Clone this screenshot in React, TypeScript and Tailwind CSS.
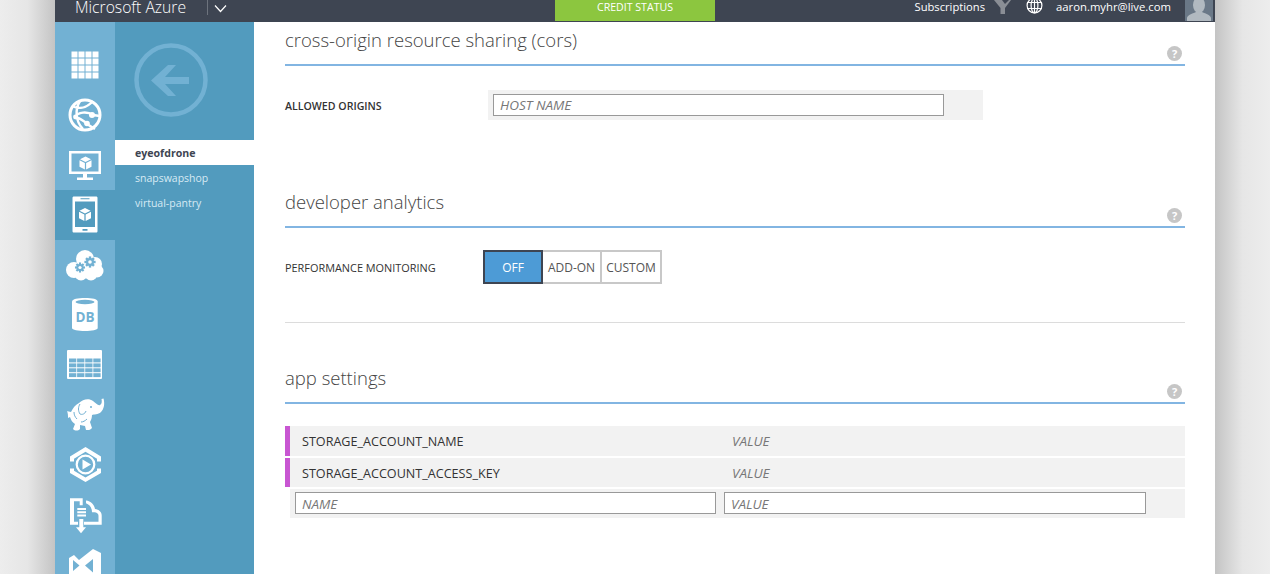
import { ReactNode } from "react";

const font = { fontFamily: '"Open Sans", "Noto Sans", sans-serif' };

// left rail icons, each one is drawn in a 40x40 box and centered in a 50px row
const GridIcon = () => (
  <svg width="40" height="40" viewBox="0 0 40 40" fill="#fff">
    {[0, 1, 2, 3].map((r) =>
      [0, 1, 2, 3].map((c) => <rect key={`${r}${c}`} x={6.5 + c * 7} y={6.5 + r * 7} width="6" height="6" />)
    )}
  </svg>
);

const WebIcon = () => (
  <svg width="40" height="40" viewBox="0 0 40 40" fill="none" stroke="#fff">
    <circle cx="20" cy="20" r="15" strokeWidth="3" />
    <path d="M7 11c6 3 14 3 21-5M15 6c-5 8-5 20 3 28M10 22c3-5 12-6 18-2l7 1M10 22c4 1 8 3 12 7l8 5" strokeWidth="2.4" />
    <circle cx="10.500" cy="22" r="2.400" fill="#fff" stroke="none" />
    <circle cx="27" cy="20" r="3" fill="#fff" stroke="none" />
    <circle cx="22" cy="28.500" r="2.800" fill="#fff" stroke="none" />
  </svg>
);

const Cube = ({ x, y }: { x: number; y: number }) => (
  <g transform={`translate(${x} ${y})`} fill="#fff">
    <path d="M6 0l5.500 2.700L6 5.400.5 2.700z" />
    <path d="M0 3.800l5.400 2.700V13L0 10.200z" />
    <path d="M12 3.800L6.600 6.500V13l5.400-2.800z" />
  </g>
);

const VmIcon = () => (
  <svg width="40" height="40" viewBox="0 0 40 40">
    <path fill="#fff" fillRule="evenodd" d="M4 6h32v23H22v3.500h6V35H12v-2.500h6V29H4zM6.500 8.500v18h27v-18z" />
    <Cube x={14.500} y={11.500} />
  </svg>
);

const MobileIcon = () => (
  <svg width="40" height="40" viewBox="0 0 40 40">
    <path
      fill="#fff"
      fillRule="evenodd"
      d="M9 1.500C8 1.500 7.500 2 7.500 3v33c0 1 .5 1.500 1.500 1.500h22c1 0 1.500-.5 1.500-1.500V3c0-1-.5-1.500-1.500-1.500zM10 6.500h20v25.500H10zM15.500 3.300h9v1h-9zM17.500 34h5v1.800h-5z"
    />
    <Cube x={14} y={13} />
  </svg>
);

const Gear = ({ x, y, r }: { x: number; y: number; r: number }) => (
  <g fill="#72b1d3">
    {[0, 45, 90, 135].map((a) => (
      <rect key={a} x={x - r * 0.3} y={y - r * 1.4} width={r * 0.6} height={r * 2.8} transform={`rotate(${a} ${x} ${y})`} />
    ))}
    <circle cx={x} cy={y} r={r} />
    <circle cx={x} cy={y} r={r * 0.45} fill="#fff" />
  </g>
);

const CloudIcon = () => (
  <svg width="40" height="40" viewBox="0 0 40 40" fill="#fff">
    <circle cx="9" cy="25" r="8" />
    <circle cx="20" cy="14" r="9" />
    <circle cx="30" cy="19" r="7" />
    <circle cx="32" cy="26" r="6.500" />
    <circle cx="16" cy="29" r="6.500" />
    <circle cx="26" cy="29" r="6.500" />
    <rect x="10" y="18" width="22" height="12" />
    <Gear x={15} y={22.500} r={3.600} />
    <Gear x={25} y={17} r={4} />
  </svg>
);

const DbIcon = () => (
  <svg width="40" height="40" viewBox="0 0 40 40">
    <path fill="#fff" d="M7 6.500c0-2.500 6-3.500 13-3.500s12.700 1 12.700 3.500V33c0 2-6 3-12.700 3S7 35 7 33z" />
    <ellipse cx="20" cy="7" rx="9.500" ry="2.200" fill="#72b1d3" />
    <text x="20" y="27" textAnchor="middle" fill="#72b1d3" fontSize="13.500" fontWeight="700" style={font}>
      DB
    </text>
  </svg>
);

const TableIcon = () => (
  <svg width="40" height="40" viewBox="0 0 40 40">
    <rect x="2" y="5" width="35" height="29" rx="1" fill="#fff" />
    {[0, 1, 2, 3].map((r) =>
      [0, 1, 2, 3].map((c) => (
        <rect key={`${r}${c}`} x={4 + c * 8.100} y={13.500 + r * 4.900} width="7.300" height="3.900" fill="#72b1d3" />
      ))
    )}
  </svg>
);

const ElephantIcon = () => (
  <svg width="40" height="40" viewBox="0 0 40 40">
    <path
      fill="#fff"
      d="M1.500 16l4.500 1C8 13 10 10 14 8c4-4 10-5 14-2 3 2 5 5 7 4 2-1 2-4 1.500-6l2-.5c1.500 5.500.5 10.500-2.500 13.500-3 3-7 2-9 3 0 3-1 5-2 7l2 6c-2 2.500-4 2-6 2l-1-4-5-1v4c-2 2-5 2-7 0l2-5c-3-2-4-4-5-7l-2 1c0-2 0-5-1-7z"
    />
    <path fill="none" stroke="#72b1d3" strokeWidth="1" d="M15 9c-2 3-2 7 0 10 2 1 5 0 6-3M9 17c0 3 1 5 3 7M16 27c2 0 4-1 6-3" />
    <circle cx="26" cy="12" r="1" fill="#72b1d3" />
  </svg>
);

const MediaIcon = () => (
  <svg width="40" height="40" viewBox="0 0 40 40">
    <path fill="#fff" d="M20.500 2L36 11.500v5h-4v-2.700L20.500 6.800 9 13.800v2.700H5v-5z" />
    <path fill="#fff" d="M20.500 37L36 28v-4.500h-4v2.300L20.500 32.500 9 25.800v-2.300H5V28z" />
    <circle cx="20.500" cy="19.500" r="8.800" fill="none" stroke="#fff" strokeWidth="2.200" />
    <path fill="#fff" d="M17.500 14.500l8.500 5-8.500 5z" />
  </svg>
);

const ImportIcon = () => (
  <svg width="40" height="40" viewBox="0 0 40 40" fill="#fff">
    <path d="M5 3.300h12.700v7h-3v-4H9v20.400h4v3H5z" />
    <path d="M21 5.500c5 .5 8 4 9 8.500 4 .5 6.700 3 6.700 6.500v9.200H19v-3h14.500v-6c0-2-2-3.500-4-3.500H27c0-5-3-8-6-9z" />
    <path d="M12.300 13H21v2h-8.700zM12.300 16.300H21v2h-8.700zM12.300 19.600H21v2h-8.700z" />
    <path d="M14.300 24h4v8.300H21l-5 6-5-6h3.300z" />
  </svg>
);

const VsIcon = () => (
  <svg width="40" height="40" viewBox="0 0 40 40">
    <path
      fill="#fff"
      fillRule="evenodd"
      d="M28 4l8 4v32H14l-5-2-5-3V13l5-3 5 5zM28 14l-8 6.500 8 7zM8 15v11l6.500-5.500z"
    />
  </svg>
);

const railIcons: { icon: ReactNode; active?: boolean }[] = [
  { icon: <GridIcon /> },
  { icon: <WebIcon /> },
  { icon: <VmIcon /> },
  { icon: <MobileIcon />, active: true },
  { icon: <CloudIcon /> },
  { icon: <DbIcon /> },
  { icon: <TableIcon /> },
  { icon: <ElephantIcon /> },
  { icon: <MediaIcon /> },
  { icon: <ImportIcon /> },
  { icon: <VsIcon /> },
];

function Header() {
  return (
    <div className="flex h-[22px] shrink-0 bg-[#3e4552] text-white">
      <div className="relative w-[500px] shrink-0 overflow-hidden">
        <div className="flex h-[14px] items-center pl-5 text-[15.700px] font-light leading-[14px]">Microsoft Azure</div>
        <div className="absolute left-[152px] top-0 h-[15px] w-px bg-[#6d737d]" />
        <svg className="absolute left-[159px] top-[4px]" width="13" height="9" viewBox="0 0 13 9" fill="none" stroke="#fff" strokeWidth="1.200">
          <path d="M1 1.500l5.500 6 5.500-6" />
        </svg>
      </div>
      <div className="flex h-[21px] w-[160px] shrink-0 items-start justify-center bg-[#8cc63f] text-[10.600px] leading-[14px]">
        CREDIT STATUS
      </div>
      <div className="flex flex-1 items-start justify-end overflow-hidden">
        <span className="text-[11.200px] leading-[14px]">Subscriptions</span>
        <svg className="ml-[8px]" width="18" height="14" viewBox="0 0 18 14" fill="#8a8e95">
          <path d="M1 0h8l3 4 4-4h2L12 8v6H7.500V8z" />
        </svg>
        <svg className="ml-[15px] mt-[-2px]" width="17" height="16" viewBox="0 0 17 16" fill="none" stroke="#fff" strokeWidth="1.200">
          <circle cx="8.500" cy="7.500" r="7.400" />
          <ellipse cx="8.500" cy="7.500" rx="3.400" ry="7.400" />
          <path d="M8.500 0v15M1 4.500h15M1 10.500h15" />
        </svg>
        <span className="ml-[13px] text-[11.300px] leading-[14px]">aaron.myhr@live.com</span>
        <div className="ml-[14px] mr-[2px] h-[21px] w-[28px] overflow-hidden bg-[#6a7887]">
          <svg width="28" height="21" viewBox="0 0 28 21" fill="#b1b9c0">
            <ellipse cx="14" cy="5" rx="6" ry="8" />
            <path d="M2 21v-3c0-3 7-5 9-6h6c2 1 9 3 9 6v3z" />
          </svg>
        </div>
      </div>
    </div>
  );
}

function Rail() {
  return (
    <div className="w-[60px] shrink-0 bg-[#72b1d3] pt-[18px]">
      {railIcons.map((item, i) => (
        <div key={i} className={`flex h-[50px] items-center justify-center ${item.active ? "bg-[#529bbe]" : ""}`}>
          {item.icon}
        </div>
      ))}
    </div>
  );
}

function SubPanel() {
  return (
    <div className="w-[139px] shrink-0 bg-[#529bbe] text-[10.500px] text-[#d7eaf4]">
      <div className="flex h-[118px] items-start pl-[19px] pt-[21px]">
        <svg width="74" height="74" viewBox="0 0 74 74" fill="none">
          <circle cx="37" cy="37" r="34.500" stroke="#72b1d3" strokeWidth="4.500" />
          <path fill="#72b1d3" d="M34 22h8l-11 12h24v7H31l11 12h-8L17 37.500z" />
        </svg>
      </div>
      <div className="flex h-[25px] items-center bg-white pl-5 pt-[2px] text-[10.600px] font-bold text-[#3e4552]">eyeofdrone</div>
      <div className="flex h-[25px] items-center pl-5 pt-[2px]">snapswapshop</div>
      <div className="flex h-[25px] items-center pl-5 pt-[2px]">virtual-pantry</div>
    </div>
  );
}

function SectionHead({ title }: { title: string }) {
  return (
    <div className="flex h-[44px] justify-between border-b-2 border-[#82b5e2]">
      <h2 className="pt-[5px] text-[18.500px] font-light leading-[26px] text-[#444]">{title}</h2>
      <div className="mb-[3px] mr-[3px] flex h-[15px] w-[15px] items-center justify-center self-end rounded-full bg-[#c6c6c6] text-[11px] font-bold leading-none text-white">
        ?
      </div>
    </div>
  );
}

const inputClass =
  "h-[22px] border border-[#999] bg-white px-[6px] text-[13.500px] italic outline-none placeholder:italic placeholder:text-[#777]";

function SettingRow({ name, last }: { name: string; last?: boolean }) {
  return (
    <div className={`flex border-l-[5px] border-[#c856d2] bg-[#f2f2f2] text-[12.600px] text-[#333] ${last ? "mt-[2px] h-[29px] pt-[3px]" : "h-[30px] pt-[2px]"}`}>
      <div className="flex w-[442px] shrink-0 items-center pl-3">{name}</div>
      <div className="flex items-center pb-[1px] text-[13.500px] italic text-[#777]">VALUE</div>
    </div>
  );
}

function Content() {
  return (
    <div className="flex-1 bg-white pl-[31px] pr-[30px] text-[#333]">
      <SectionHead title="cross-origin resource sharing (cors)" />
      <div className="mt-6 flex items-center">
        <div className="w-[203px] shrink-0 pt-[3px] text-[10.600px] font-semibold text-[#333]">ALLOWED ORIGINS</div>
        <div className="flex h-[30px] w-[495px] items-center bg-[#f2f2f2] pl-[5px]">
          <input className={`${inputClass} w-[451px]`} placeholder="HOST NAME" />
        </div>
      </div>

      <div className="mt-16">
        <SectionHead title="developer analytics" />
      </div>
      <div className="mt-[22px] flex items-center">
        <div className="w-[198px] shrink-0 pt-[3px] text-[10.900px] font-medium text-[#333]">PERFORMANCE MONITORING</div>
        <div className="flex h-[34px] text-[12px] text-[#555]">
          <div className="flex w-[60px] items-center justify-center border-2 border-[#3e4552] bg-[#4d9bd6] pt-[2px] text-white">OFF</div>
          <div className="flex w-[59px] items-center justify-center border-y-2 border-r-2 border-[#c8c8c8] pt-[2px]">ADD-ON</div>
          <div className="flex w-[60px] items-center justify-center border-y-2 border-r-2 border-[#c8c8c8] pt-[2px]">CUSTOM</div>
        </div>
      </div>

      <div className="mt-[38px] h-px bg-[#dcdcdc]" />

      <div className="mt-[37px]">
        <SectionHead title="app settings" />
      </div>
      <div className="mt-[22px]">
        <SettingRow name="STORAGE_ACCOUNT_NAME" />
        <SettingRow name="STORAGE_ACCOUNT_ACCESS_KEY" last />
        <div className="ml-[5px] mt-[2px] flex h-[29px] items-start gap-2 bg-[#f2f2f2] pl-[5px] pt-[3px]">
          <input className={`${inputClass} w-[421px] pt-[2px]`} placeholder="NAME" />
          <input className={`${inputClass} w-[422px] pt-[2px]`} placeholder="VALUE" />
        </div>
      </div>
    </div>
  );
}

export default function App() {
  return (
    <div className="flex h-[574px] w-[1270px] overflow-hidden" style={font}>
      <div className="w-[55px] shrink-0 bg-gradient-to-r from-[#ededed] via-[#e6e6e6] to-[#c4c4c4]" />
      <div className="flex w-[1160px] shrink-0 flex-col overflow-hidden">
        <Header />
        <div className="flex min-h-0 flex-1">
          <Rail />
          <SubPanel />
          <Content />
        </div>
      </div>
      <div className="w-[55px] shrink-0 bg-gradient-to-l from-[#ededed] via-[#e6e6e6] to-[#c4c4c4]" />
    </div>
  );
}
